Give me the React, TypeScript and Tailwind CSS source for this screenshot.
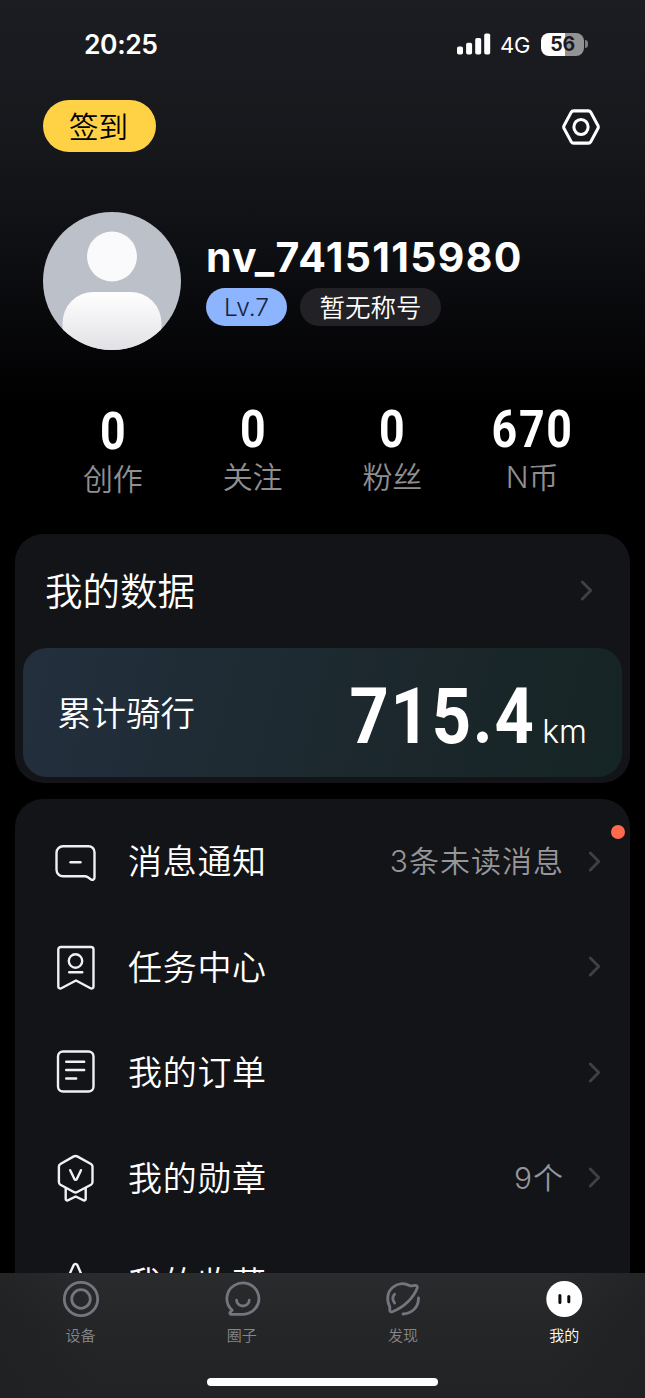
import type { ReactNode } from "react";
import clsx from "clsx";

const stats = [
  { value: "0", label: "创作", shifted: true },
  { value: "0", label: "关注" },
  { value: "0", label: "粉丝" },
  { value: "670", label: "N币" },
];

function LineIcon({ children }: { children: ReactNode }) {
  return (
    <svg
      viewBox="0 0 48 48"
      className="size-12 shrink-0"
      fill="none"
      stroke="#f1f1f3"
      strokeWidth="2.4"
      strokeLinecap="round"
      strokeLinejoin="round"
    >
      {children}
    </svg>
  );
}

const menu: { label: string; note?: string; dot?: boolean; icon: ReactNode }[] = [
  {
    label: "消息通知",
    note: "3条未读消息",
    dot: true,
    icon: (
      <LineIcon>
        <path d="M11 8.200h25.500a6 6 0 0 1 6 6v25.500a2.200 2.200 0 0 1-3.400 1.800l-3.600-2.400a5 5 0 0 0-2.800-.8H11a6.500 6.500 0 0 1-6.500-6.500V14.700A6.500 6.500 0 0 1 11 8.200z" />
        <path d="M18.500 24.300h10" />
      </LineIcon>
    ),
  },
  {
    label: "任务中心",
    icon: (
      <LineIcon>
        <path d="M9 4h30a2.500 2.500 0 0 1 2.500 2.500v37a2 2 0 0 1-3 1.800L24 37.500 9.300 45.300a2 2 0 0 1-3-1.800v-37A2.500 2.500 0 0 1 9 4z" />
        <circle cx="23.500" cy="18" r="6.700" />
        <path d="M17.200 29.300h13" />
      </LineIcon>
    ),
  },
  {
    label: "我的订单",
    icon: (
      <LineIcon>
        <rect x="6" y="2.500" width="35.500" height="40" rx="5" />
        <path d="M14.200 12.800h18M14.200 21h18M14.200 29.500h10" />
      </LineIcon>
    ),
  },
  {
    label: "我的勋章",
    note: "9个",
    icon: (
      <LineIcon>
        <path d="M21.800 2.400a3.500 3.500 0 0 1 3.400 0L39 10a3 3 0 0 1 1.500 2.600v15.500a3 3 0 0 1-1.500 2.600L25.200 38a3.500 3.500 0 0 1-3.400 0L8.400 30.700a3 3 0 0 1-1.500-2.600V12.600A3 3 0 0 1 8.400 10z" />
        <path d="M18.200 16.200l4.200 8.800a1.300 1.300 0 0 0 2.400 0l4.200-8.800" />
        <path d="M13.700 34.500v10.500a1.400 1.400 0 0 0 2 1.300l8-3.800 8 3.800a1.400 1.400 0 0 0 2-1.300V34.500" />
      </LineIcon>
    ),
  },
  {
    label: "我的收藏",
    icon: (
      <LineIcon>
        <path d="M21.700 5a2 2 0 0 1 3.600 0l5 11.500 12 1.500-9 8.500 2.500 12.500-12.300-6.500L11 39l2.500-12.500-9-8.500 12-1.500z" />
      </LineIcon>
    ),
  },
];

const tabs: { label: string; active?: boolean; icon: ReactNode }[] = [
  {
    label: "设备",
    icon: (
      <>
        <circle cx="18" cy="18" r="16.700" />
        <circle cx="18" cy="18" r="9.300" />
      </>
    ),
  },
  {
    label: "圈子",
    icon: (
      <>
        <path d="M8.200 29.300A16 15.700 0 1 1 19 33.300H7a1.200 1.200 0 0 1-.8-2z" />
        <path d="M12.600 19.200a6.300 5.800 0 0 0 12.600 0" />
      </>
    ),
  },
  {
    label: "发现",
    icon: (
      <>
        <path d="M4.800 25.800C1.200 19 2.200 11 7.800 6.300c4.700-4 11.200-4.700 16.600-1.900.8.400 1.600.5 2.500.4l3.300-.4c1.500-.2 2.500 1.200 2 2.600C28.700 16.500 19.200 26.300 7.300 30.700c-1.400.5-2.700-.3-2.500-1.800z" />
        <path d="M33.500 17c0 9-6 15.300-15.500 16M9.600 13.200a6.300 6.300 0 0 0 0 8.800" />
      </>
    ),
  },
  {
    label: "我的",
    active: true,
    icon: (
      <>
        <circle cx="18.300" cy="18" r="18" fill="#fff" stroke="none" />
        <path d="M13.900 14.600v7" stroke="#0b0b0c" strokeWidth="3" />
        <path d="M22.800 15.400v5.400" stroke="#0b0b0c" strokeWidth="3" />
      </>
    ),
  },
];

function Chevron() {
  return (
    <svg viewBox="0 0 14 24" className="h-6 w-3.5 shrink-0" fill="none" stroke="#3f4044" strokeWidth="2.900" strokeLinecap="round" strokeLinejoin="round">
      <path d="M2.300 3l8.400 8.500-8.400 8.500" />
    </svg>
  );
}

function StatusBar() {
  return (
    <div className="flex h-[88px] items-center justify-between pr-[57px] pl-[84px]">
      <span className="pt-0.5 font-[Inter] text-[26.500px] font-semibold tracking-[-0.4px]">20:25</span>
      <div className="flex items-center">
        <svg viewBox="0 0 34 22" className="h-[22px] w-[34px]" fill="#fff">
          <rect x="0" y="13.500" width="6" height="8" rx="1.800" />
          <rect x="9.100" y="9.800" width="6" height="11.700" rx="1.800" />
          <rect x="18.200" y="5" width="6" height="16.500" rx="1.800" />
          <rect x="27.200" y="0.500" width="6" height="21" rx="1.800" />
        </svg>
        <span className="ml-[9px] pt-0.5 font-[Inter] text-[22px] tracking-[-0.3px]">4G</span>
        <div className="ml-[11px] flex h-[23px] w-[43px] items-center justify-center rounded-[8px] bg-[linear-gradient(90deg,#fff_56%,#939396_56%)] pt-px font-[Inter] text-[19.500px] leading-none font-bold tracking-[-0.3px] text-[#1b1c21]">
          56
        </div>
        <div className="ml-px h-2 w-[3px] rounded-r-full bg-[#7d7d81]" />
      </div>
    </div>
  );
}

export default function App() {
  return (
    <div className="flex h-[1398px] w-[645px] flex-col overflow-hidden bg-black font-[Inter,'Noto_Sans_CJK_SC',sans-serif] text-white">
      <main className="h-[1273px] overflow-hidden bg-[linear-gradient(180deg,#1c1d22_0px,#17181c_140px,#0f1014_240px,#000_405px)]">
        <StatusBar />

        <header className="flex h-[76px] items-center justify-between pr-[45px] pl-[43px]">
          <button className="flex h-[52px] w-[113px] items-center justify-center rounded-full bg-[#ffd145] pt-[3px] pr-0.5 text-[29.500px] leading-none font-[350] text-black">
            签到
          </button>
          <svg viewBox="0 0 40 38" className="mt-0.5 h-[38px] w-[38px]" preserveAspectRatio="none" fill="none" stroke="#fff" strokeWidth="3.200" strokeLinejoin="round">
            <path d="M12.300 2.800h15.400a3 3 0 0 1 2.600 1.500l7.500 13.200a3 3 0 0 1 0 3l-7.500 13.200a3 3 0 0 1-2.600 1.500H12.300a3 3 0 0 1-2.600-1.500L2.200 20.500a3 3 0 0 1 0-3L9.700 4.300a3 3 0 0 1 2.600-1.500z" />
            <circle cx="20" cy="19" r="7.500" />
          </svg>
        </header>

        <section className="mt-12 flex h-[138px] pl-[43px]">
          <svg viewBox="0 0 138 138" className="size-[138px]">
            <defs>
              <clipPath id="avatar">
                <circle cx="69" cy="69" r="69" />
              </clipPath>
              <linearGradient id="body" x1="0" y1="0" x2="0" y2="1">
                <stop offset="0" stopColor="#fff" />
                <stop offset="1" stopColor="#dddee2" />
              </linearGradient>
            </defs>
            <g clipPath="url(#avatar)">
              <rect width="138" height="138" fill="#bcc0c9" />
              <circle cx="69" cy="44.500" r="25" fill="#fafafc" />
              <rect x="19.500" y="80" width="99" height="66" rx="31" fill="url(#body)" />
            </g>
          </svg>
          <div className="ml-[25px] pt-5">
            <div className="font-[Inter] text-[41px] leading-[50px] font-bold tracking-[1.3px]">nv_7415115980</div>
            <div className="mt-1.5 flex gap-[13px]">
              <span className="flex h-[38px] w-[81px] items-center justify-center rounded-full bg-[#8cb4ff] text-[24.500px] font-light text-[#16233d]">
                Lv.7
              </span>
              <span className="flex h-[38px] w-[141px] items-center justify-center rounded-full bg-[#222226] pt-px text-[25.500px] leading-none font-[350]">
                暂无称号
              </span>
            </div>
          </div>
        </section>

        <section className="mt-[50px] flex h-[134px] px-[43px]">
          {stats.map((s) => (
            <div key={s.label} className={clsx("flex flex-1 flex-col items-center", s.shifted && "pt-0.5")}>
              <span className="scale-x-[0.86] pl-0.5 font-[Roboto] text-[52px] leading-[60px] font-bold tracking-[2px]">{s.value}</span>
              <span className="text-[30px] leading-[34px] font-[350] text-[#8f8f91]">{s.label}</span>
            </div>
          ))}
        </section>

        <section className="mx-[15px] h-[249px] rounded-[28px] bg-[#131418] px-2">
          <div className="flex h-[114px] items-center justify-between pr-7 pl-[22px]">
            <h2 className="pt-0.5 text-[37.500px] leading-none font-[350]">我的数据</h2>
            <Chevron />
          </div>
          <div className="flex h-[129px] items-center justify-between rounded-[24px] bg-[linear-gradient(105deg,#242f3e_0%,#1e2b33_35%,#1b272b_68%,#152424_100%)] pr-[35px] pl-[34px]">
            <span className="pt-1 text-[34.500px] leading-none font-[350]">累计骑行</span>
            <div className="flex items-baseline pt-2">
              <span className="origin-right scale-x-[0.88] font-[Roboto] text-[78px] leading-none font-bold tracking-[2px]">715.4</span>
              <span className="ml-[7px] font-[Inter] text-[32px] leading-none font-light">km</span>
            </div>
          </div>
        </section>

        <section className="mx-[15px] mt-4 rounded-t-[28px] bg-[#131418] pt-[10px]">
          {menu.map((m) => (
            <div key={m.label} className="relative flex h-[105.500px] items-center pr-7 pl-[37px]">
              {m.icon}
              <span className="ml-7 pt-px text-[34px] leading-none font-[350] tracking-[0.7px]">{m.label}</span>
              <span className="mr-6 ml-auto pb-px text-[30px] leading-none font-[350] tracking-[1px] text-[#97979a]">{m.note}</span>
              <Chevron />
              {m.dot && <i className="absolute top-4 right-[5px] size-3.5 rounded-full bg-[#ff6a4f]" />}
            </div>
          ))}
        </section>
      </main>

      <nav className="flex h-[125px] shrink-0 flex-col items-center bg-[linear-gradient(90deg,#1c1d1f80_0%,transparent_15%,transparent_85%,#1c1d1f80_100%),linear-gradient(180deg,#2a2b2d_0%,#252628_40%,#222325_100%)]">
        <div className="flex h-[105px] w-full pt-2">
          {tabs.map((t) => (
            <div key={t.label} className={clsx("flex flex-1 flex-col items-center", t.active ? "text-white" : "text-[#85868a]")}>
              <svg viewBox="0 0 36 36" className="size-9 overflow-visible" fill="none" stroke="#74757e" strokeWidth="2.800" strokeLinecap="round" strokeLinejoin="round">
                {t.icon}
              </svg>
              <span className="mt-2.5 text-[15px] leading-[18px] font-[350]">{t.label}</span>
            </div>
          ))}
        </div>
        <div className="h-2 w-[231px] rounded-full bg-white" />
      </nav>
    </div>
  );
}
